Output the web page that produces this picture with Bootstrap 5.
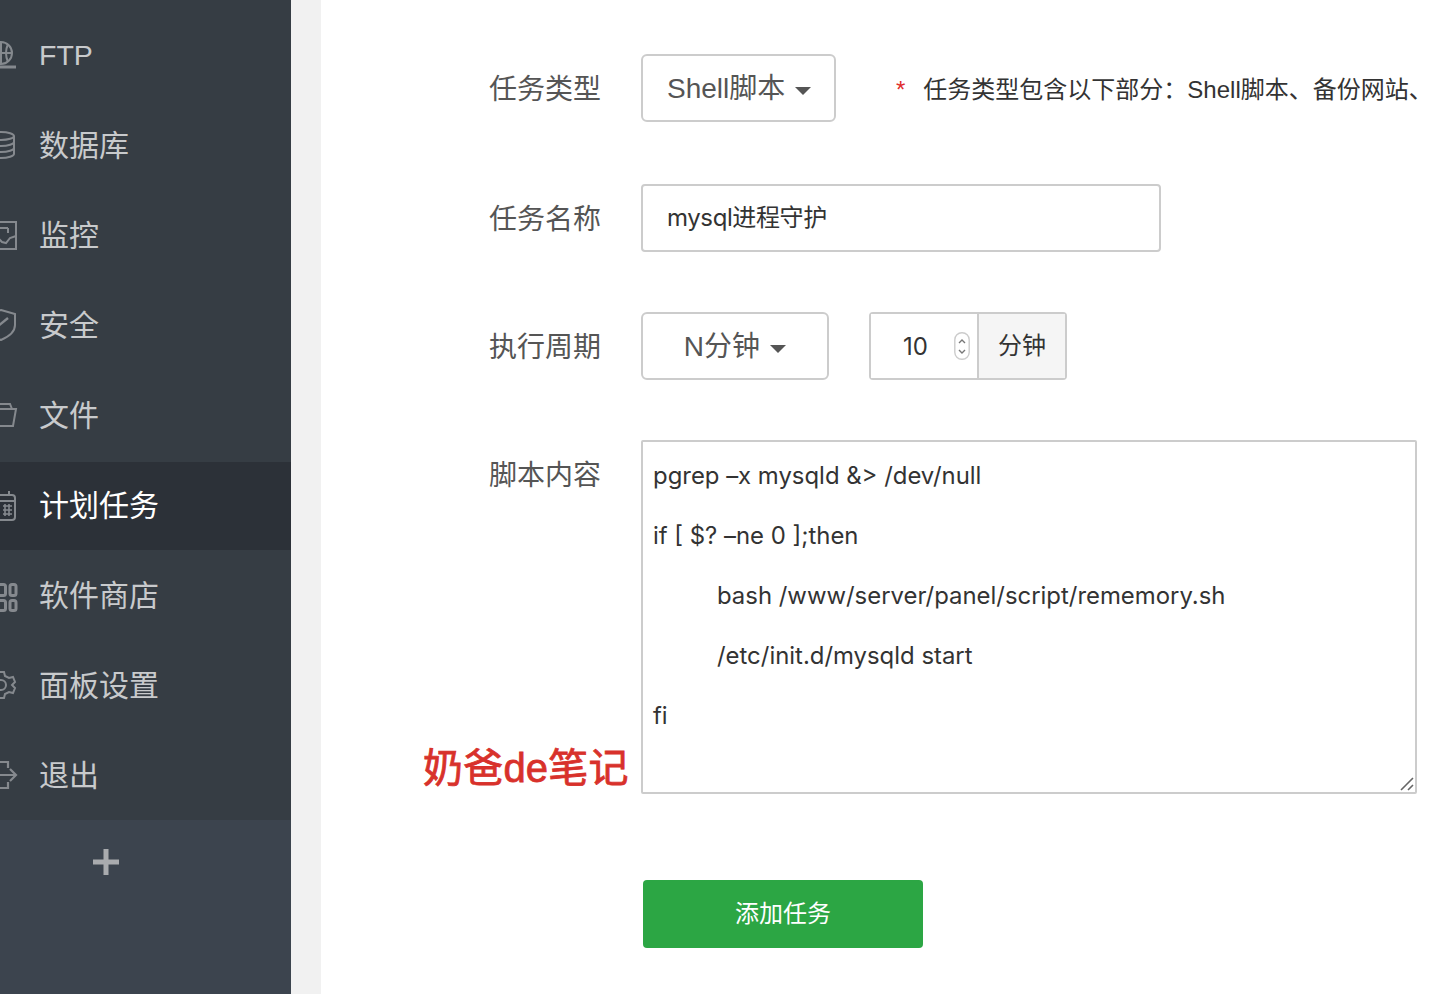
<!DOCTYPE html>
<html lang="zh-CN">
<head>
<meta charset="utf-8">
<title>计划任务</title>
<link rel="stylesheet" href="https://cdn.jsdelivr.net/npm/bootstrap@5.3.0/dist/css/bootstrap.min.css">
<style>
html,body{height:100%;overflow:hidden}
body{font-family:"Liberation Sans","Noto Sans CJK SC",sans-serif;background:#fff;color:#555}
.shell-page{height:994px;width:1434px;overflow:hidden}
.side-panel{width:291px;flex:none;background:#3c444e}
.side-list{background:#363d44;padding-top:10px}
.side-item{height:90px;color:#c8cacc;font-size:30px;line-height:1;gap:23px}
.side-item span{padding-top:2px}
.side-item span.latin-name{padding-top:0;font-size:28.5px}
.side-item.is-on span{padding-top:0}
.side-item.is-on{background:#2c3138;color:#fff;height:88px;margin:2px 0 0}
.side-ico{width:30px;height:30px;margin-left:-14px;flex:none;color:#85898e;overflow:visible}
.side-add{height:84px;color:#a9abae;padding-left:93px}
.side-gutter{width:30px;flex:none;background:#f1f1f1}
.main-pane{padding:54px 0 0 168px;min-width:0}
.form-line{height:68px;margin-bottom:60px;gap:40px}
.form-line.first{margin-bottom:62px}
.form-line.tall{height:354px;margin-bottom:86px;position:relative}
.line-label{width:112px;flex:none;font-size:28px;line-height:1;white-space:nowrap;color:#555;padding-top:4px}
.line-label.at-top{margin-top:18px}
.pick-btn{height:68px;flex:none;border:2px solid #ccc;border-radius:6px;background:#fff;color:#555;font-size:28px;padding:2px 24px 0;line-height:1;white-space:nowrap}
.pick-btn::after{margin-left:.36em;vertical-align:.1em}
.pick-btn.type-pick{width:195px}
.pick-btn.cycle-pick{width:188px}
.pick-btn:hover{background:#fff;color:#555;border-color:#ccc}
.hint-text{font-size:24px;color:#333;margin-left:20px;white-space:nowrap;padding-top:4px}
.hint-text b{color:#e02d2d;font-weight:400;margin-right:18px}
.name-field{width:520px;height:68px;flex:none;border:2px solid #ccc;border-radius:4px;font-family:Inter,"Noto Sans CJK SC",sans-serif;font-size:24px;letter-spacing:-.4px;color:#333;padding:0 24px 6px}
.num-group{width:198px;height:68px;flex:none;border:2px solid #ccc;border-radius:4px;font-size:24px;color:#333}
.num-field{width:107px;height:64px;padding:0 8px 0 32px;font-family:Inter,sans-serif;font-size:24px;color:#333}
.num-spin{width:16px;height:28px;margin-left:-24px;flex:none}
.num-unit{flex:1;background:#f5f5f5;border-left:2px solid #ccc;font-size:24px;margin-left:7px}
.script-wrap{width:776px;height:354px;flex:none;position:relative}
.script-box{display:block;width:100%;height:100%;border:2px solid #ccc;border-radius:2px;font-family:Inter,"Noto Sans CJK SC",sans-serif;font-size:23.9px;line-height:60px;color:#333;padding:4px 10px 2px;tab-size:64px;white-space:pre;resize:none}
.script-grip{position:absolute;right:2px;bottom:2px;width:16px;height:16px;pointer-events:none}
.stamp-mark{position:absolute;left:-66px;top:305px;font-size:40px;line-height:46px;color:#d8312b;white-space:nowrap;-webkit-text-stroke:.8px #d8312b;letter-spacing:.2px}
.save-btn{width:280px;height:68px;margin-left:154px;background:#2ca644;border:0;border-radius:4px;color:#fff;font-size:24px}
</style>
</head>
<body>
<div class="shell-page d-flex">
  <aside class="side-panel">
    <div class="side-list">
      <div class="side-item d-flex align-items-center">
        <svg class="side-ico" viewBox="0 0 30 30" fill="none" stroke="currentColor" stroke-width="2"><circle cx="15" cy="13" r="11"/><path d="M4 13h22M15 2v22M8 4q4 9 0 18M22 4q-4 9 0 18"/><path d="M2 27h28" stroke-width="3"/></svg>
        <span class="latin-name">FTP</span>
      </div>
      <div class="side-item d-flex align-items-center">
        <svg class="side-ico" viewBox="0 0 30 30" fill="none" stroke="currentColor" stroke-width="2"><ellipse cx="15" cy="6" rx="13" ry="4"/><path d="M2 6v18c0 2 6 4 13 4s13-2 13-4V6M2 12c0 2 6 4 13 4s13-2 13-4M2 18c0 2 6 4 13 4s13-2 13-4"/></svg>
        <span>数据库</span>
      </div>
      <div class="side-item d-flex align-items-center">
        <svg class="side-ico" viewBox="0 0 30 30" fill="none" stroke="currentColor" stroke-width="2"><rect x="2" y="2" width="28" height="27"/><path d="M2 20l9-3 5 5 4 1 4-5 6-2M8 8h14M22 8v5"/></svg>
        <span>监控</span>
      </div>
      <div class="side-item d-flex align-items-center">
        <svg class="side-ico" viewBox="0 0 30 30" fill="none" stroke="currentColor" stroke-width="2"><path d="M15 0l14 4v11c0 7-7 12-14 15C8 27 1 22 1 15V4z"/><path d="M6 21L22 8" stroke-width="2.4"/></svg>
        <span>安全</span>
      </div>
      <div class="side-item d-flex align-items-center">
        <svg class="side-ico" viewBox="0 0 30 30" fill="none" stroke="currentColor" stroke-width="2"><path d="M2 26V9h28l-3 17z"/><path d="M2 9l3-5h19l2 5"/></svg>
        <span>文件</span>
      </div>
      <div class="side-item is-on d-flex align-items-center">
        <svg class="side-ico" viewBox="0 0 30 30" fill="none" stroke="currentColor" stroke-width="2"><rect x="2" y="4" width="27" height="25" rx="3"/><path d="M2 10h27M8 0v5M23 0v5"/><path d="M17 15h9M17 19h9M17 23h9M19 13v12M23 13v12" stroke-width="1.6"/></svg>
        <span>计划任务</span>
      </div>
      <div class="side-item d-flex align-items-center">
        <svg class="side-ico" viewBox="0 0 30 30" fill="none" stroke="currentColor" stroke-width="3"><rect x="11" y="4.5" width="8.5" height="11" rx="2"/><rect x="24" y="4.5" width="6" height="11" rx="2"/><rect x="11" y="20.5" width="8.5" height="10" rx="2"/><rect x="24" y="20.5" width="6" height="10" rx="2"/></svg>
        <span>软件商店</span>
      </div>
      <div class="side-item d-flex align-items-center">
        <svg class="side-ico" viewBox="0 0 30 30" fill="none" stroke="currentColor" stroke-width="2"><circle cx="15" cy="15" r="5"/><path d="M12 2h6l1 4 4 2 4-1 2 5-3 3 3 3-2 5-4-1-4 2-1 4h-6l-1-4-4-2-4 1-2-5 3-3-3-3 2-5 4 1 4-2z"/></svg>
        <span>面板设置</span>
      </div>
      <div class="side-item d-flex align-items-center">
        <svg class="side-ico" viewBox="0 0 30 30" fill="none" stroke="currentColor" stroke-width="2.2"><path d="M22 8V2H3v26h19v-6"/><path d="M10 15h20M24 9l6 6-6 6"/></svg>
        <span>退出</span>
      </div>
    </div>
    <div class="side-add d-flex align-items-center">
      <svg width="26" height="26" viewBox="0 0 26 26" fill="currentColor"><path d="M10.5 0h5v10.5H26v5H15.500V26h-5V15.500H0v-5h10.500z"/></svg>
    </div>
  </aside>
  <div class="side-gutter"></div>
  <main class="main-pane flex-grow-1">
    <div class="form-line first d-flex align-items-center">
      <label class="line-label">任务类型</label>
      <button type="button" class="btn pick-btn type-pick dropdown-toggle">Shell脚本</button>
      <span class="hint-text"><b>*</b>任务类型包含以下部分：Shell脚本、备份网站、</span>
    </div>
    <div class="form-line d-flex align-items-center">
      <label class="line-label">任务名称</label>
      <input class="form-control name-field" type="text" value="mysql进程守护">
    </div>
    <div class="form-line d-flex align-items-center">
      <label class="line-label">执行周期</label>
      <button type="button" class="btn pick-btn cycle-pick dropdown-toggle">N分钟</button>
      <div class="num-group d-flex align-items-center">
        <input class="form-control border-0 rounded-0 num-field" type="text" value="10">
        <svg class="num-spin" viewBox="0 0 16 28" fill="none" stroke="#777" stroke-width="1.4"><rect x=".8" y=".8" width="14.4" height="26.4" rx="7" stroke="#ccc"/><path d="M5 11l3-3 3 3M5 18l3 3 3-3"/></svg>
        <div class="num-unit d-flex align-items-center justify-content-center h-100">分钟</div>
      </div>
    </div>
    <div class="form-line tall d-flex align-items-start">
      <label class="line-label at-top">脚本内容</label>
      <div class="script-wrap">
        <textarea class="script-box" spellcheck="false">pgrep –x mysqld &amp;&gt; /dev/null
if [ $? –ne 0 ];then
	bash /www/server/panel/script/rememory.sh
	/etc/init.d/mysqld start
fi</textarea>
        <svg class="script-grip" viewBox="0 0 16 16" fill="none" stroke="#666" stroke-width="1.6"><path d="M2 14L14 2M9 14l5-5"/></svg>
      </div>
      <div class="stamp-mark">奶爸de笔记</div>
    </div>
    <button type="button" class="btn save-btn">添加任务</button>
  </main>
</div>
<script src="https://cdn.jsdelivr.net/npm/bootstrap@5.3.0/dist/js/bootstrap.bundle.min.js"></script>
</body>
</html>
